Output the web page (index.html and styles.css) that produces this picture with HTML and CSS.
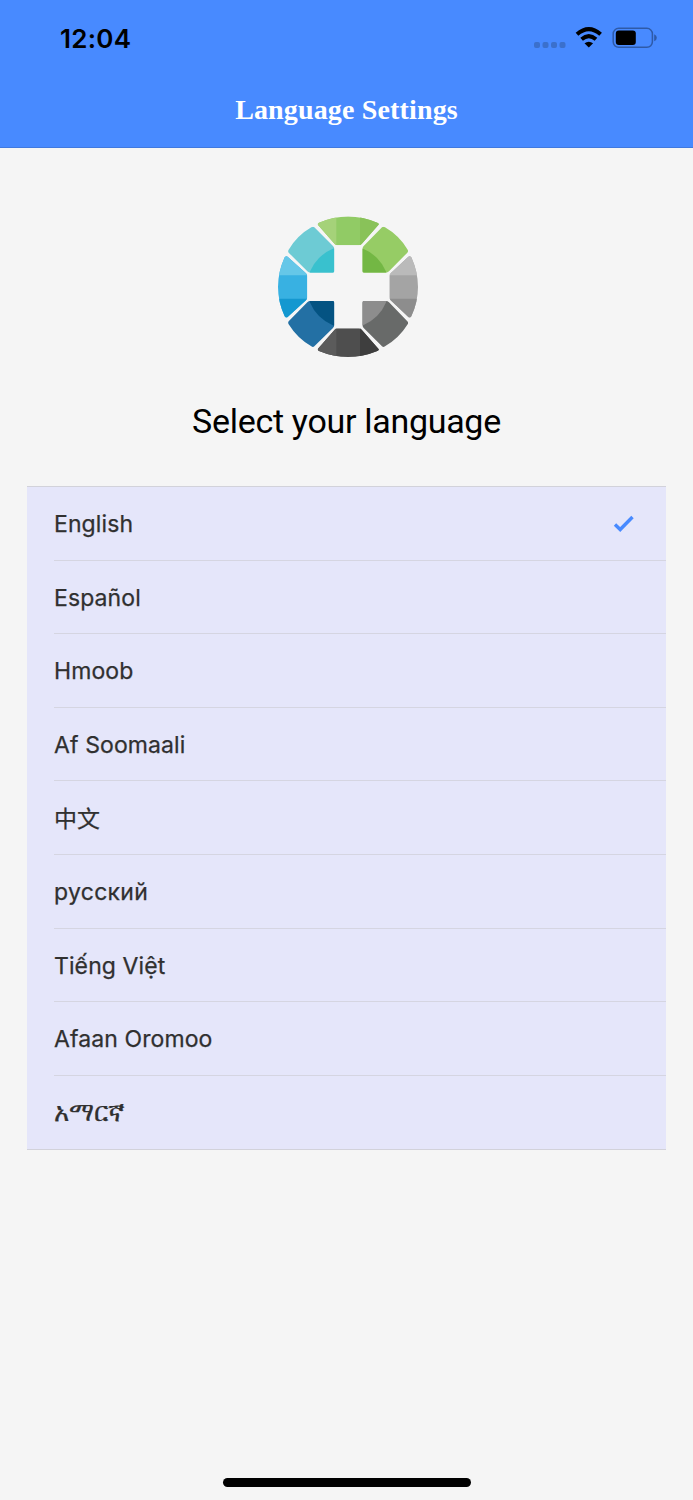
FILE: index.html
```
<!DOCTYPE html>
<html lang="en">
<head>
<meta charset="utf-8">
<title>Language Settings</title>
<link rel="stylesheet" href="styles.css">
</head>
<body>
<div class="screen">
  <header class="header">
    <div class="status">
      <span class="time">12:04</span>
      <svg class="status-icons" width="130" height="30" viewBox="0 0 130 30">
        <g fill="#3b70cc"><rect x="4" y="17" width="6" height="6" rx="2"/><rect x="12.500" y="17" width="6" height="6" rx="2"/><rect x="21" y="17" width="6" height="6" rx="2"/><rect x="29.500" y="17" width="6" height="6" rx="2"/></g>
        <g fill="none" stroke="#000" stroke-width="4"><path d="M47 9.300Q58.800-1.200 70.600 9.300"/><path d="M51.600 14.300Q58.800 8.100 66 14.300"/></g>
        <path d="M54.500 18.300Q58.800 15.300 63.100 18.300L58.800 22.500Z"/>
        <rect x="83.200" y="3.300" width="39.200" height="19" rx="5.500" fill="none" stroke="#2e5aa8" stroke-width="1.500"/>
        <rect x="85.800" y="5.600" width="20" height="14.400" rx="3"/>
        <path d="M124.200 9.300Q126.800 10.300 126.800 12.800T124.200 16.300Z" fill="#2e5aa8"/>
      </svg>
    </div>
    <h1 class="title">Language Settings</h1>
  </header>
  <main class="content">
    <svg class="logo" width="160" height="160" viewBox="0 0 480 480">
      <defs>
        <clipPath id="top"><path d="M150 54Q147 50 153 47Q240 10 328 47Q335 50 331 54L281 111Q277 115 272 115H209Q204 115 200 111Z"/></clipPath>
        <clipPath id="right"><path d="M421 149Q425 145 430 151Q470 240 430 328Q426 334 421 330L368 280Q364 276 364 271V208Q364 203 368 199Z"/></clipPath>
        <clipPath id="bottom"><path d="M150 425Q147 429 153 432Q240 468 328 432Q335 429 331 425L281 368Q277 364 272 364H209Q204 364 200 368Z"/></clipPath>
        <clipPath id="left"><path d="M59 149Q55 145 50 151Q10 240 50 328Q54 334 59 330L114 280Q118 276 118 271V208Q118 203 114 199Z"/></clipPath>
        <clipPath id="nw"><path d="M130 61Q135 57 139 61L195 117Q199 121 199 126V192Q199 197 194 197H127Q122 197 118 193L62 137Q59 133 62 128Q88 85 130 61Z"/></clipPath>
        <clipPath id="ne"><path d="M351 61Q346 57 342 61L287 117Q283 121 283 126V192Q283 197 288 197H354Q359 197 363 193L418 137Q422 133 419 128Q393 85 351 61Z"/></clipPath>
        <clipPath id="sw"><path d="M130 418Q135 422 139 418L195 363Q199 359 199 354V287Q199 282 194 282H127Q122 282 118 286L62 343Q59 347 62 352Q88 394 130 418Z"/></clipPath>
        <clipPath id="se"><path d="M351 418Q346 422 342 418L287 363Q283 359 283 354V287Q283 282 288 282H354Q359 282 363 286L418 343Q422 347 419 352Q393 394 351 418Z"/></clipPath>
      </defs>
      <g clip-path="url(#top)"><path fill="#91cb65" d="M140 20h206v110H140z"/><path fill="#a5d279" d="M140 20h65v110h-65z"/><path fill="#89c259" d="M276 20h70v110h-70z"/></g>
      <g clip-path="url(#right)"><path fill="#a4a4a4" d="M355 140h110v205H355z"/><path fill="#bababa" d="M355 140h110v65H355z"/><path fill="#8d8d8d" d="M355 275h110v70H355z"/></g>
      <g clip-path="url(#bottom)"><path fill="#4e4e4e" d="M140 350h206v110H140z"/><path fill="#5b5b5b" d="M140 350h65v110h-65z"/><path fill="#3e3e3e" d="M276 350h70v110h-70z"/></g>
      <g clip-path="url(#left)"><path fill="#38b1e2" d="M20 140h110v205H20z"/><path fill="#65c7e8" d="M20 140h110v65H20z"/><path fill="#1498d0" d="M20 275h110v70H20z"/></g>
      <g clip-path="url(#nw)"><path fill="#6dcbd4" d="M50 50h160v160H50z"/><circle cx="240" cy="240" r="123" fill="#39c1ce"/></g>
      <g clip-path="url(#ne)"><path fill="#96cc65" d="M270 50h160v160H270z"/><circle cx="240" cy="240" r="123" fill="#73b744"/></g>
      <g clip-path="url(#sw)"><path fill="#2370a4" d="M50 270h160v160H50z"/><circle cx="240" cy="240" r="123" fill="#045382"/></g>
      <g clip-path="url(#se)"><path fill="#686a69" d="M270 270h160v160H270z"/><circle cx="240" cy="240" r="123" fill="#8d8d8d"/></g>
    </svg>
    <h2 class="prompt">Select your language</h2>
    <ul class="languages">
      <li class="language"><span>English</span><svg class="check" width="22" height="20" viewBox="0 0 22 20"><path d="M2 10.500L7.200 15.500L19.500 3" fill="none" stroke="#488aff" stroke-width="3.400"/></svg></li>
      <li class="language"><span>Español</span></li>
      <li class="language"><span>Hmoob</span></li>
      <li class="language"><span>Af Soomaali</span></li>
      <li class="language"><span class="chinese" lang="zh">中文</span></li>
      <li class="language"><span class="russian">русский</span></li>
      <li class="language"><span>Tiếng Việt</span></li>
      <li class="language"><span>Afaan Oromoo</span></li>
      <li class="language"><span class="amharic" lang="am">አማርኛ</span></li>
    </ul>
  </main>
  <div class="home-indicator"></div>
</div>
</body>
</html>
```
FILE: styles.css
```
* { box-sizing: border-box; }
body { margin: 0; background: #f5f5f5; color: #000; font-family: Inter, "Noto Sans", sans-serif; }
.screen { height: 1500px; display: flex; flex-direction: column; align-items: center; }
.header { width: 100%; height: 148px; background: #488aff; border-bottom: 1px solid #4079df; }
.status { height: 76px; display: flex; justify-content: space-between; padding: 25px 33px 0 60px; }
.time { font-size: 26px; font-weight: 600; line-height: 28px; letter-spacing: .25px; }
.title { margin: 16px 0 0; text-align: center; color: #fff; font: bold 28px/36px "Liberation Serif", serif; letter-spacing: .15px; }
.content { width: 100%; flex: 1; padding: 59px 27px 0; display: flex; flex-direction: column; align-items: center; }
.logo { margin-left: 3px; }
.prompt { margin: 33px 0 0; font: 400 34px/42px Roboto, sans-serif; letter-spacing: -.3px; }
.languages { list-style: none; width: 100%; margin: 44px 0 0; padding: 0; height: 664px; background: #e5e6fa; border-top: 1px solid #d2d2da; border-bottom: 1px solid #d2d2da; display: grid; grid-template-rows: repeat(8, 73.6px) 1fr; }
.language { margin-left: 27px; padding: 2px 31px 0 0; border-bottom: 1px solid #d5d5e1; display: flex; align-items: center; justify-content: space-between; font-size: 23px; font-weight: 400; letter-spacing: .1px; color: #303030; -webkit-text-stroke: .25px #303030; }
.language:last-child { border-bottom: 0; }
.chinese { font-family: "Noto Sans CJK SC", sans-serif; margin-top: -4px; }
.russian { letter-spacing: .3px; }
.amharic { font-size: 26px; margin-top: -2px; }
.home-indicator { width: 248px; height: 9px; margin-bottom: 13px; border-radius: 5px; background: #000; }
```
